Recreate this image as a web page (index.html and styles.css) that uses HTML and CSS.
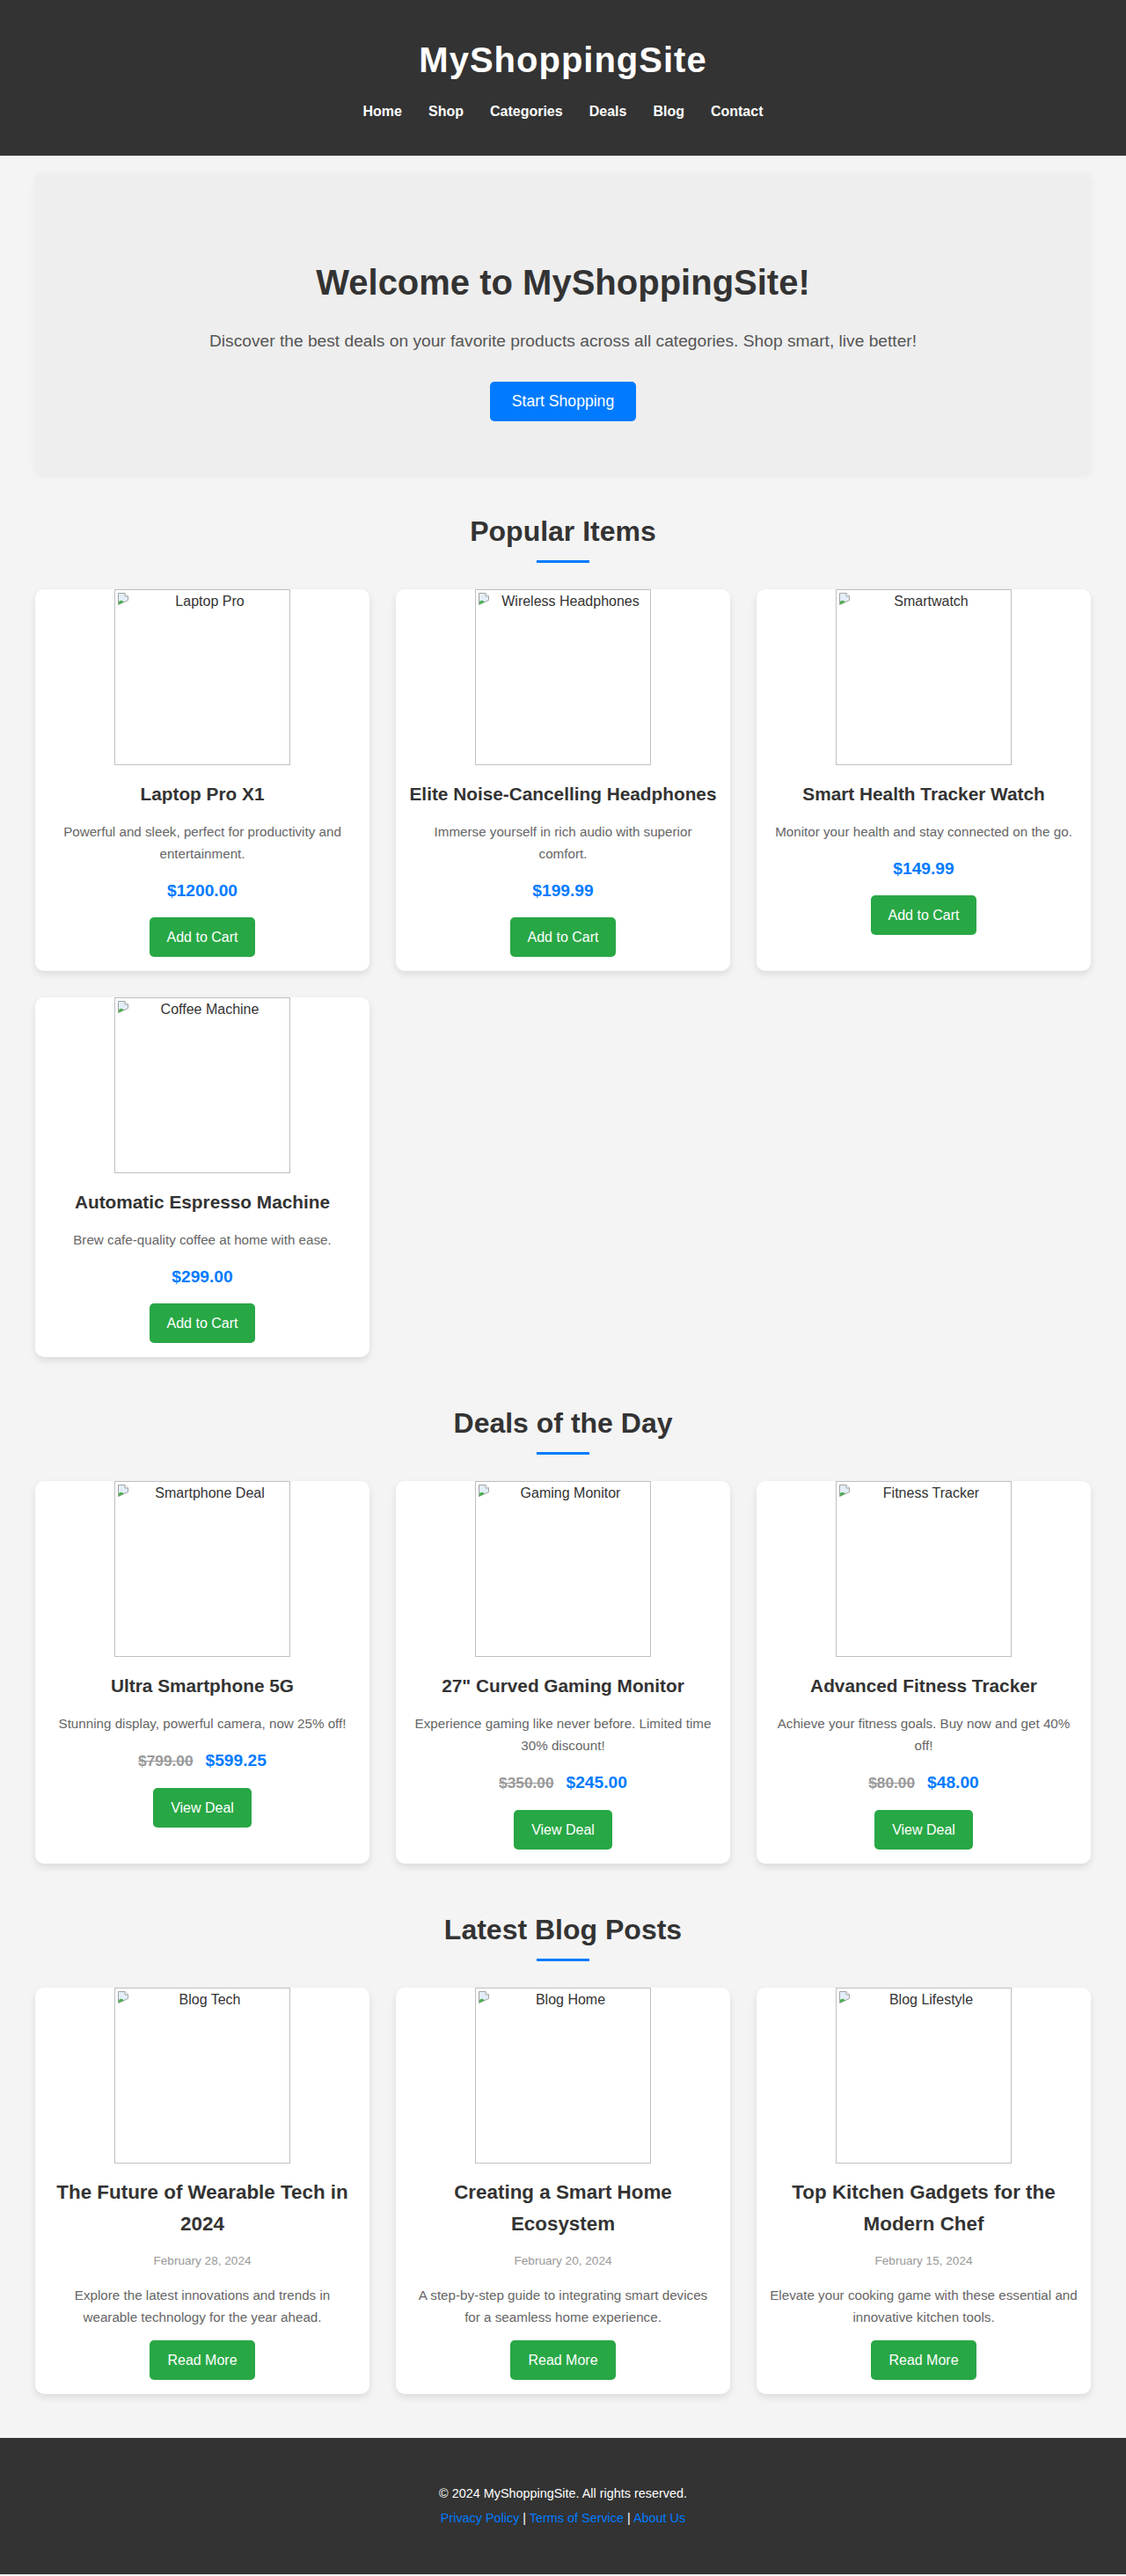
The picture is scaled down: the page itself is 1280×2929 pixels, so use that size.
FILE: index.html
```html
<!DOCTYPE html>
<html lang="en">
<head>
    <meta charset="UTF-8">
    <meta name="viewport" content="width=device-width, initial-scale=1.0">
    <title>MyShoppingSite</title>
    <link rel="stylesheet" href="styles.css">
</head>
<body>
    <header class="site-header">
        <h1>MyShoppingSite</h1>
        <nav>
            <ul class="nav">
                <li><a href="#">Home</a></li>
                <li><a href="#">Shop</a></li>
                <li><a href="#">Categories</a></li>
                <li><a href="#">Deals</a></li>
                <li><a href="#">Blog</a></li>
                <li><a href="#">Contact</a></li>
            </ul>
        </nav>
    </header>

    <main>
        <div class="container">
            <section class="hero">
                <h1>Welcome to MyShoppingSite!</h1>
                <p>Discover the best deals on your favorite products across all categories. Shop smart, live better!</p>
                <a href="#" class="btn-primary">Start Shopping</a>
            </section>

            <!-- Popular items -->
            <section class="section">
                <h2 class="section-title">Popular Items</h2>
                <div class="title-bar"></div>
                <div class="grid">
                    <div class="card">
                        <div class="img-ph"><svg class="broken" width="16" height="16" viewBox="0 0 16 16"><path d="M2.5 1.5h7.5l3.5 3.5v4.5l-11 5z" fill="#e3eef9" stroke="#a3a3a3"/><path d="M10 1.5v3.5h3.5" fill="#fff" stroke="#a3a3a3"/><path d="M3 14.2v-3.2c2-1.6 4-1.6 6 0.4z" fill="#4caf50"/></svg><span>Laptop Pro</span></div>
                        <div class="card-body">
                            <h3>Laptop Pro X1</h3>
                            <p class="desc">Powerful and sleek, perfect for productivity and entertainment.</p>
                            <p class="price">$1200.00</p>
                            <a href="#" class="btn">Add to Cart</a>
                        </div>
                    </div>
                    <div class="card">
                        <div class="img-ph"><svg class="broken" width="16" height="16" viewBox="0 0 16 16"><path d="M2.5 1.5h7.5l3.5 3.5v4.5l-11 5z" fill="#e3eef9" stroke="#a3a3a3"/><path d="M10 1.5v3.5h3.5" fill="#fff" stroke="#a3a3a3"/><path d="M3 14.2v-3.2c2-1.6 4-1.6 6 0.4z" fill="#4caf50"/></svg><span>Wireless Headphones</span></div>
                        <div class="card-body">
                            <h3>Elite Noise-Cancelling Headphones</h3>
                            <p class="desc">Immerse yourself in rich audio with superior comfort.</p>
                            <p class="price">$199.99</p>
                            <a href="#" class="btn">Add to Cart</a>
                        </div>
                    </div>
                    <div class="card">
                        <div class="img-ph"><svg class="broken" width="16" height="16" viewBox="0 0 16 16"><path d="M2.5 1.5h7.5l3.5 3.5v4.5l-11 5z" fill="#e3eef9" stroke="#a3a3a3"/><path d="M10 1.5v3.5h3.5" fill="#fff" stroke="#a3a3a3"/><path d="M3 14.2v-3.2c2-1.6 4-1.6 6 0.4z" fill="#4caf50"/></svg><span>Smartwatch</span></div>
                        <div class="card-body">
                            <h3>Smart Health Tracker Watch</h3>
                            <p class="desc">Monitor your health and stay connected on the go.</p>
                            <p class="price">$149.99</p>
                            <a href="#" class="btn">Add to Cart</a>
                        </div>
                    </div>
                    <div class="card">
                        <div class="img-ph"><svg class="broken" width="16" height="16" viewBox="0 0 16 16"><path d="M2.5 1.5h7.5l3.5 3.5v4.5l-11 5z" fill="#e3eef9" stroke="#a3a3a3"/><path d="M10 1.5v3.5h3.5" fill="#fff" stroke="#a3a3a3"/><path d="M3 14.2v-3.2c2-1.6 4-1.6 6 0.4z" fill="#4caf50"/></svg><span>Coffee Machine</span></div>
                        <div class="card-body">
                            <h3>Automatic Espresso Machine</h3>
                            <p class="desc">Brew cafe-quality coffee at home with ease.</p>
                            <p class="price">$299.00</p>
                            <a href="#" class="btn">Add to Cart</a>
                        </div>
                    </div>
                </div>
            </section>

            <!-- Deals -->
            <section class="section">
                <h2 class="section-title">Deals of the Day</h2>
                <div class="title-bar"></div>
                <div class="grid">
                    <div class="card">
                        <div class="img-ph"><svg class="broken" width="16" height="16" viewBox="0 0 16 16"><path d="M2.5 1.5h7.5l3.5 3.5v4.5l-11 5z" fill="#e3eef9" stroke="#a3a3a3"/><path d="M10 1.5v3.5h3.5" fill="#fff" stroke="#a3a3a3"/><path d="M3 14.2v-3.2c2-1.6 4-1.6 6 0.4z" fill="#4caf50"/></svg><span>Smartphone Deal</span></div>
                        <div class="card-body">
                            <h3>Ultra Smartphone 5G</h3>
                            <p class="desc">Stunning display, powerful camera, now 25% off!</p>
                            <p class="price"><span class="old-price">$799.00</span>$599.25</p>
                            <a href="#" class="btn">View Deal</a>
                        </div>
                    </div>
                    <div class="card">
                        <div class="img-ph"><svg class="broken" width="16" height="16" viewBox="0 0 16 16"><path d="M2.5 1.5h7.5l3.5 3.5v4.5l-11 5z" fill="#e3eef9" stroke="#a3a3a3"/><path d="M10 1.5v3.5h3.5" fill="#fff" stroke="#a3a3a3"/><path d="M3 14.2v-3.2c2-1.6 4-1.6 6 0.4z" fill="#4caf50"/></svg><span>Gaming Monitor</span></div>
                        <div class="card-body">
                            <h3>27" Curved Gaming Monitor</h3>
                            <p class="desc">Experience gaming like never before. Limited time 30% discount!</p>
                            <p class="price"><span class="old-price">$350.00</span>$245.00</p>
                            <a href="#" class="btn">View Deal</a>
                        </div>
                    </div>
                    <div class="card">
                        <div class="img-ph"><svg class="broken" width="16" height="16" viewBox="0 0 16 16"><path d="M2.5 1.5h7.5l3.5 3.5v4.5l-11 5z" fill="#e3eef9" stroke="#a3a3a3"/><path d="M10 1.5v3.5h3.5" fill="#fff" stroke="#a3a3a3"/><path d="M3 14.2v-3.2c2-1.6 4-1.6 6 0.4z" fill="#4caf50"/></svg><span>Fitness Tracker</span></div>
                        <div class="card-body">
                            <h3>Advanced Fitness Tracker</h3>
                            <p class="desc">Achieve your fitness goals. Buy now and get 40% off!</p>
                            <p class="price"><span class="old-price">$80.00</span>$48.00</p>
                            <a href="#" class="btn">View Deal</a>
                        </div>
                    </div>
                </div>
            </section>

            <!-- Blog -->
            <section class="section">
                <h2 class="section-title">Latest Blog Posts</h2>
                <div class="title-bar"></div>
                <div class="grid">
                    <div class="card">
                        <div class="img-ph"><svg class="broken" width="16" height="16" viewBox="0 0 16 16"><path d="M2.5 1.5h7.5l3.5 3.5v4.5l-11 5z" fill="#e3eef9" stroke="#a3a3a3"/><path d="M10 1.5v3.5h3.5" fill="#fff" stroke="#a3a3a3"/><path d="M3 14.2v-3.2c2-1.6 4-1.6 6 0.4z" fill="#4caf50"/></svg><span>Blog Tech</span></div>
                        <div class="card-body">
                            <h3 class="post-title">The Future of Wearable Tech in 2024</h3>
                            <p class="date">February 28, 2024</p>
                            <p class="desc">Explore the latest innovations and trends in wearable technology for the year ahead.</p>
                            <a href="#" class="btn">Read More</a>
                        </div>
                    </div>
                    <div class="card">
                        <div class="img-ph"><svg class="broken" width="16" height="16" viewBox="0 0 16 16"><path d="M2.5 1.5h7.5l3.5 3.5v4.5l-11 5z" fill="#e3eef9" stroke="#a3a3a3"/><path d="M10 1.5v3.5h3.5" fill="#fff" stroke="#a3a3a3"/><path d="M3 14.2v-3.2c2-1.6 4-1.6 6 0.4z" fill="#4caf50"/></svg><span>Blog Home</span></div>
                        <div class="card-body">
                            <h3 class="post-title">Creating a Smart Home Ecosystem</h3>
                            <p class="date">February 20, 2024</p>
                            <p class="desc">A step-by-step guide to integrating smart devices for a seamless home experience.</p>
                            <a href="#" class="btn">Read More</a>
                        </div>
                    </div>
                    <div class="card">
                        <div class="img-ph"><svg class="broken" width="16" height="16" viewBox="0 0 16 16"><path d="M2.5 1.5h7.5l3.5 3.5v4.5l-11 5z" fill="#e3eef9" stroke="#a3a3a3"/><path d="M10 1.5v3.5h3.5" fill="#fff" stroke="#a3a3a3"/><path d="M3 14.2v-3.2c2-1.6 4-1.6 6 0.4z" fill="#4caf50"/></svg><span>Blog Lifestyle</span></div>
                        <div class="card-body">
                            <h3 class="post-title">Top Kitchen Gadgets for the Modern Chef</h3>
                            <p class="date">February 15, 2024</p>
                            <p class="desc">Elevate your cooking game with these essential and innovative kitchen tools.</p>
                            <a href="#" class="btn">Read More</a>
                        </div>
                    </div>
                </div>
            </section>
        </div>
    </main>

    <footer class="site-footer">
        <p>&copy; 2024 MyShoppingSite. All rights reserved.</p>
        <p><a href="#">Privacy Policy</a> | <a href="#">Terms of Service</a> | <a href="#">About Us</a></p>
    </footer>
</body>
</html>
```

FILE: styles.css
```css
body {
    margin: 0;
    font-family: "Liberation Sans", Arial, sans-serif;
    background-color: #f4f4f4;
    color: #333;
    line-height: 1.6;
}

/* header */
.site-header {
    background-color: #333;
    color: #fff;
    text-align: center;
    padding: 45px 20px 37px;
}

.site-header h1 {
    margin: 0 0 23px;
    font-size: 40px;
    line-height: 46px;
    letter-spacing: 1px;
}

.nav {
    display: flex;
    justify-content: center;
    gap: 30px;
    list-style: none;
    margin: 0;
    padding: 0;
}

.nav a {
    color: #fff;
    text-decoration: none;
    font-weight: bold;
    font-size: 16px;
    line-height: 26px;
}

main {
    padding: 20px 40px 40px;
}

.container {
    max-width: 1200px;
    margin: 0 auto;
}

/* hero */
.hero {
    background-color: #eee;
    border-radius: 8px;
    box-shadow: 0 2px 10px rgba(0, 0, 0, 0.05);
    padding: 100px 20px 60px;
    display: flex;
    flex-direction: column;
    align-items: center;
    text-align: center;
}

.hero h1 {
    margin: 0 0 27px;
    font-size: 40px;
    line-height: 48px;
    color: #333;
}

.hero p {
    margin: 0 0 31px;
    font-size: 19.2px;
    line-height: 31px;
    color: #555;
}

.btn-primary {
    background-color: #007bff;
    color: #fff;
    font-size: 17.6px;
    line-height: 21px;
    padding: 12px 25px;
    border-radius: 5px;
    text-decoration: none;
}

/* sections */
.section {
    padding-top: 45px;
}

.section-title {
    margin: 0 0 13px;
    font-size: 32px;
    line-height: 40px;
    text-align: center;
    color: #333;
}

.title-bar {
    width: 60px;
    height: 3px;
    background-color: #007bff;
    margin: 0 auto 30px;
}

.grid {
    display: grid;
    grid-template-columns: repeat(3, 1fr);
    gap: 30px;
    margin-bottom: 10px;
}

.card {
    background-color: #fff;
    border-radius: 10px;
    box-shadow: 0 4px 8px rgba(0, 0, 0, 0.1);
    overflow: hidden;
    display: flex;
    flex-direction: column;
    align-items: center;
    text-align: center;
}

/* image that failed to load: box with alt text */
.img-ph {
    width: 200px;
    height: 200px;
    box-sizing: border-box;
    border: 1px solid #c0c0c0;
    display: flex;
    align-items: flex-start;
    flex: none;
}

.img-ph .broken {
    flex: none;
    margin: 2px 0 0 1px;
}

.img-ph span {
    flex: 1;
    text-align: center;
    font-size: 16px;
    line-height: 26px;
    color: #333;
}

.card-body {
    align-self: stretch;
    padding: 15px 15px 16px;
    display: flex;
    flex-direction: column;
    align-items: center;
}

.card h3 {
    margin: 0 0 12px;
    font-size: 20.8px;
    line-height: 36px;
    color: #333;
}

.card h3.post-title {
    font-size: 22.4px;
}

.card .desc {
    margin: 0 0 14px;
    font-size: 15.2px;
    line-height: 25px;
    color: #666;
}

.card .date {
    margin: 0 0 15px;
    font-size: 13.6px;
    line-height: 23px;
    color: #999;
}

.price {
    margin: 0 0 15px;
    font-size: 19.2px;
    line-height: 31px;
    font-weight: bold;
    color: #007bff;
}

.old-price {
    font-size: 17.28px;
    color: #999;
    text-decoration: line-through;
    margin-right: 14px;
}

.btn {
    background-color: #28a745;
    color: #fff;
    font-size: 16px;
    line-height: 25px;
    padding: 10px 20px;
    border-radius: 5px;
    text-decoration: none;
}

/* footer */
.site-footer {
    background-color: #333;
    color: #fff;
    text-align: center;
    padding: 47px 20px;
}

.site-footer p {
    margin: 5px 0;
    font-size: 14.4px;
    line-height: 23px;
}

.site-footer a {
    color: #007bff;
    text-decoration: none;
}
```
